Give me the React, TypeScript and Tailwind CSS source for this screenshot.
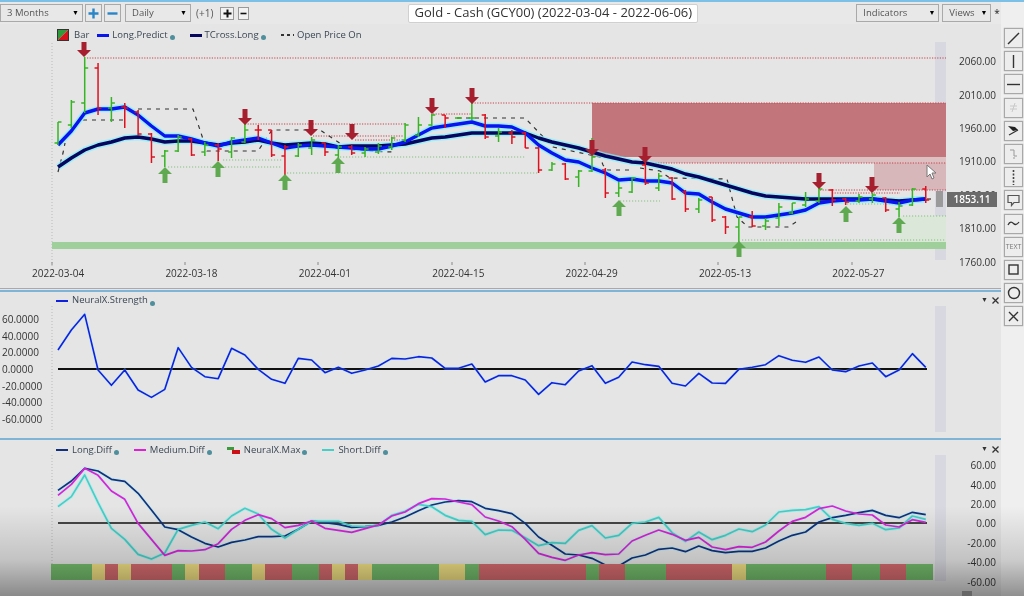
import { ReactNode } from 'react';

// bar: high, low, open (left tick), close (right tick), colour
type Bar = [number, number, number, number, 'g' | 'r'];

const BARS: Bar[] = [
  [122, 145, 143, 122, 'g'], [100, 128, 125, 102, 'g'], [57, 113, 103, 68, 'g'], [63, 115, 68, 108, 'r'],
  [97, 122, 108, 103, 'g'], [103, 128, 107, 108, 'r'], [110, 135, 112, 134, 'r'], [133, 163, 134, 157, 'r'],
  [150, 167, 156, 151, 'g'], [135, 152, 151, 137, 'g'], [138, 156, 139, 155, 'r'], [142, 156, 152, 145, 'g'],
  [143, 161, 145, 149, 'r'], [137, 158, 152, 138, 'g'], [123, 143, 142, 130, 'g'], [125, 140, 130, 130, 'r'],
  [130, 157, 130, 155, 'r'], [145, 175, 156, 147, 'r'], [143, 157, 156, 145, 'g'], [137, 155, 148, 140, 'g'],
  [143, 156, 143, 152, 'r'], [145, 163, 155, 147, 'g'], [145, 155, 147, 153, 'r'], [147, 157, 153, 149, 'g'],
  [143, 154, 152, 146, 'g'], [137, 150, 147, 138, 'g'], [123, 142, 140, 125, 'g'], [117, 137, 135, 125, 'g'],
  [114, 127, 125, 115, 'g'], [115, 128, 115, 118, 'r'], [117, 119, 118, 118, 'g'], [103, 120, 118, 118, 'g'],
  [114, 139, 115, 137, 'r'], [128, 142, 136, 132, 'g'], [130, 144, 133, 137, 'r'], [132, 148, 133, 148, 'r'],
  [147, 173, 148, 170, 'r'], [162, 171, 170, 164, 'g'], [163, 180, 164, 179, 'r'], [170, 187, 177, 171, 'g'],
  [138, 172, 171, 157, 'g'], [168, 198, 170, 193, 'r'], [182, 197, 193, 188, 'g'], [177, 193, 192, 178, 'g'],
  [157, 185, 165, 183, 'r'], [173, 191, 188, 176, 'g'], [177, 200, 178, 199, 'r'], [190, 212, 192, 209, 'r'],
  [198, 213, 209, 200, 'g'], [197, 222, 197, 220, 'r'], [216, 234, 217, 227, 'r'], [217, 243, 227, 217, 'g'],
  [211, 227, 217, 226, 'r'], [218, 230, 226, 221, 'g'], [203, 226, 218, 207, 'g'], [203, 214, 213, 203, 'g'],
  [192, 207, 205, 199, 'g'], [188, 203, 201, 189, 'g'], [189, 206, 190, 200, 'r'], [198, 205, 199, 202, 'r'],
  [194, 203, 201, 197, 'g'], [193, 203, 199, 195, 'g'], [197, 212, 198, 210, 'r'], [202, 217, 209, 206, 'g'],
  [188, 206, 205, 189, 'g'], [186, 203, 189, 200, 'r'],
];

const LONG_PREDICT = [
  145, 131, 113, 109, 109, 107, 115, 126, 136, 136, 139, 143, 146, 142, 140, 138, 143, 148, 146, 145, 146, 147,
  148, 149, 149, 146, 142, 135, 128, 126, 124, 122, 126, 126, 127, 133, 145, 153, 160, 162, 168, 173, 180, 179,
  181, 181, 183, 193, 194, 202, 209, 213, 217, 217, 215, 213, 210, 203, 201, 200, 200, 199, 201, 203, 200, 199,
];

const TCROSS_LONG = [
  167, 158, 150, 145, 142, 138, 137, 139, 142, 141, 141, 143, 145, 143, 142, 140, 143, 145, 144, 143, 144, 147,
  146, 146, 146, 145, 144, 141, 138, 137, 135, 133, 133, 133, 133, 133, 138, 142, 145, 148, 152, 156, 159, 162,
  163, 166, 169, 174, 177, 181, 185, 189, 193, 196, 197, 198, 199, 199, 199, 199, 199, 199, 200, 201, 200, 199,
];

const STRENGTH = [
  180, 120, 73, 240, 286, 240, 300, 322, 298, 173, 232, 260, 266, 175, 195, 238, 268, 280, 205, 210, 248, 232, 250,
  240, 228, 205, 207, 200, 204, 235, 235, 222, 276, 257, 257, 270, 313, 278, 284, 243, 227, 280, 262, 216, 224, 229,
  280, 288, 250, 279, 280, 238, 232, 224, 197, 211, 217, 201, 240, 245, 228, 219, 260, 240, 191, 232,
];

const LONG_DIFF = [
  163, 135, 97, 105, 130, 136, 172, 222, 273, 281, 303, 322, 333, 319, 312, 302, 302, 300, 280, 255, 260, 265, 274,
  272, 268, 258, 243, 224, 207, 198, 194, 197, 217, 224, 233, 262, 303, 328, 354, 357, 367, 387, 390, 366, 357, 340,
  336, 347, 330, 344, 350, 346, 346, 336, 315, 298, 288, 258, 245, 238, 230, 223, 238, 245, 229, 236,
];

const MEDIUM_DIFF = [
  178, 145, 97, 118, 165, 190, 262, 310, 358, 344, 345, 341, 323, 280, 253, 236, 248, 275, 268, 255, 277, 283, 289,
  278, 267, 240, 228, 203, 188, 189, 198, 206, 243, 255, 272, 310, 352, 364, 373, 357, 350, 356, 354, 315, 298, 282,
  295, 313, 304, 333, 341, 332, 334, 318, 285, 256, 244, 218, 210, 225, 234, 237, 267, 273, 251, 259,
];

const SHORT_DIFF = [
  212, 182, 117, 200, 277, 310, 355, 369, 351, 280, 268, 258, 278, 240, 217, 234, 280, 306, 280, 256, 256, 256, 270,
  272, 268, 238, 226, 205, 212, 238, 253, 256, 296, 282, 283, 305, 329, 320, 322, 283, 269, 306, 298, 262, 258, 244,
  290, 316, 288, 311, 298, 279, 287, 267, 228, 223, 221, 212, 250, 262, 268, 262, 281, 276, 240, 250,
];

const G = '#76bf6e';
const Y = '#f5e486';
const R = '#d86c70';

// edges of the NeuralX.Max strip
const MAX_STRIP: [number, number, string][] = [
  [51, 92, G], [92, 105, Y], [105, 118, R], [118, 131, Y], [131, 172, R], [172, 185, G], [185, 199, Y], [199, 225, R],
  [225, 252, G], [252, 265, Y], [265, 292, R], [292, 319, G], [319, 332, R], [332, 345, Y], [345, 358, R], [358, 372, Y],
  [372, 439, G], [439, 465, Y], [465, 479, G], [479, 586, R], [586, 599, G], [599, 625, R], [625, 666, G], [666, 732, R],
  [732, 746, Y], [746, 826, G], [826, 852, R], [852, 880, G], [880, 906, R], [906, 933, G],
];

const DOWN_ARROWS: [number, number][] = [[84, 57], [245, 125], [311, 136], [352, 140], [432, 114], [472, 104], [592, 156], [645, 163], [819, 189], [872, 193]];
const UP_ARROWS: [number, number][] = [[165, 167], [218, 161], [285, 174], [338, 157], [619, 200], [739, 241], [846, 206], [899, 217]];

const RED_DOTS: [number, number, number][] = [[87, 946, 58], [472, 592, 103], [433, 472, 114], [245, 405, 124], [313, 403, 136], [355, 400, 140], [592, 946, 103], [645, 946, 163], [820, 946, 190], [832, 900, 193]];
const GREEN_DOTS: [number, number, number][] = [[223, 282, 160], [168, 282, 167], [287, 539, 173], [340, 525, 157], [620, 660, 201], [847, 899, 204], [903, 946, 216], [742, 946, 240]];

const OPEN_PRICE = [
  '58,172 63,153 65,143',
  '83,120 125,120',
  '138,109 193,109 200,130 207,151 258,151 272,130 320,130 335,140 350,150 392,152',
  '457,118 525,118 553,147',
  '553,147 600,157 603,165 607,170 633,170',
  '640,168 660,171 670,178 727,179 732,198 737,217 748,227 788,227 796,222',
  '927,199 934,199',
];

const barX = (i: number) => 58 + 13.35 * i;
const pts = (values: number[], y: (v: number) => number = v => v) => values.map((v, i) => `${barX(i)},${y(v)}`).join(' ');

function Dot() {
  return <span className="inline-block w-[5px] h-[5px] rounded-full bg-[#4f8f9c] mt-[5px]" />;
}

function LegendLine({ className }: { className: string }) {
  return <span className={`inline-block w-[12px] ${className}`} />;
}

function Select({ label, className }: { label: string; className: string }) {
  return (
    <div className={`h-[18px] border border-[#a9a9a9] flex items-center justify-between pl-[6px] pr-[3px] ${className}`}>
      <span className="text-[9.5px] text-[#555]">{label}</span>
      <span className="text-[7px] text-black">▼</span>
    </div>
  );
}

function PanelControls() {
  return (
    <div className="flex items-center gap-[4px] pr-[2px] text-[#333]">
      <span className="text-[7px]">▼</span>
      <svg width="7" height="7" viewBox="0 0 7 7"><path d="M0.5 0.5 6.5 6.5M6.5 0.5 0.5 6.5" stroke="#333" strokeWidth="1.3" /></svg>
    </div>
  );
}

function ToolButton({ children }: { children: ReactNode }) {
  return (
    <div className="w-[19px] h-[20px] border border-[#a8a8a8] bg-[#ededed] flex items-center justify-center shadow-[0_0_1px_#999] shrink-0">
      {children}
    </div>
  );
}

function AxisLabels({ values, itemClass, className }: { values: string[]; itemClass: string; className: string }) {
  return (
    <div className={`flex flex-col text-[10px] text-[#333] ${className}`}>
      {values.map(v => (
        <div key={v} className={`flex items-center shrink-0 ${itemClass}`}>{v}</div>
      ))}
    </div>
  );
}

function StripBackground({ top, height }: { top: number; height: number }) {
  return <rect x={935} y={top} width={11} height={height} fill="#d8d8e0" />;
}

function MainChart() {
  return (
    <svg width="900" height="224" viewBox="50 42 900 224" className="shrink-0">
      <StripBackground top={42} height={218} />
      <line x1={52} y1={43} x2={52} y2={266} stroke="#bbb" strokeDasharray="1 2" />

      {/* zones */}
      <rect x={592} y={103} width={354} height={54} fill="#c2767c" />
      <rect x={645} y={157} width={301} height={6} fill="#dcc0c2" />
      <rect x={874} y={163} width={72} height={27} fill="#d7b7ba" />
      <rect x={900} y={216} width={46} height={26} fill="#dbe7d8" />
      <rect x={52} y={242} width={894} height={7} fill="#9fcf9a" />

      {RED_DOTS.map(([a, b, y]) => (
        <line key={`${a}-${y}`} x1={a} y1={y} x2={b} y2={y} stroke="#c8404a" strokeDasharray="1.2 1.4" />
      ))}
      {GREEN_DOTS.map(([a, b, y]) => (
        <line key={`${a}-${y}`} x1={a} y1={y} x2={b} y2={y} stroke="#6fb964" opacity="0.8" strokeDasharray="1.2 1.8" />
      ))}
      {OPEN_PRICE.map(p => (
        <polyline key={p} points={p} fill="none" stroke="#333" strokeWidth="1.2" strokeDasharray="4 5" />
      ))}

      {/* averages */}
      <polyline points={pts(TCROSS_LONG)} fill="none" stroke="#7ff2fc" strokeWidth="6.5" opacity="0.7" strokeLinejoin="round" />
      <polyline points={pts(LONG_PREDICT)} fill="none" stroke="#7ff2fc" strokeWidth="6.5" opacity="0.7" strokeLinejoin="round" />
      <polyline points={pts(TCROSS_LONG)} fill="none" stroke="#06065e" strokeWidth="3.4" strokeLinejoin="round" />
      <polyline points={pts(LONG_PREDICT)} fill="none" stroke="#0a14ee" strokeWidth="3.4" strokeLinejoin="round" />

      {BARS.map(([hi, lo, open, close, c], i) => {
        const x = barX(i);
        const col = c === 'g' ? '#36b522' : '#e0101e';
        return (
          <g key={i} stroke={col} strokeWidth="1.5">
            <line x1={x} y1={hi} x2={x} y2={lo} />
            <line x1={x - 3.5} y1={open} x2={x} y2={open} />
            <line x1={x} y1={close} x2={x + 3.5} y2={close} />
          </g>
        );
      })}

      {DOWN_ARROWS.map(([x, tip]) => (
        <path key={x} d={`M${x - 2.5} ${tip - 16}h5v9h4.5l-7 7-7-7h4.5z`} fill="#a51f2e" />
      ))}
      {UP_ARROWS.map(([x, tip]) => (
        <path key={x} d={`M${x - 2.5} ${tip + 16}h5v-9h4.5l-7-7-7 7h4.5z`} fill="#5fa950" />
      ))}

      <rect x={936} y={191} width={7} height={16} fill="#9a9a9a" />
      {[52, 185, 318, 452, 585, 718, 852].map(x => (
        <line key={x} x1={x} y1={262} x2={x} y2={265} stroke="#888" />
      ))}
    </svg>
  );
}

function StrengthChart() {
  const y = (v: number) => 290 + v / 3;
  return (
    <svg width="900" height="127" viewBox="50 306 900 127" className="shrink-0">
      <StripBackground top={306} height={126} />
      <line x1={52} y1={306} x2={52} y2={430} stroke="#bbb" strokeDasharray="1 2" />
      <line x1={58} y1={369} x2={927} y2={369} stroke="#111" strokeWidth="2" />
      <polyline points={pts(STRENGTH, y)} fill="none" stroke="#86f0fa" strokeWidth="3" opacity="0.3" />
      <polyline points={pts(STRENGTH, y)} fill="none" stroke="#1020e0" strokeWidth="1.6" strokeLinejoin="round" />
    </svg>
  );
}

function DiffChart() {
  const y = (v: number) => 436 + v / 3;
  return (
    <svg width="900" height="127" viewBox="50 455 900 127" className="shrink-0">
      <StripBackground top={455} height={126} />
      <line x1={52} y1={455} x2={52} y2={564} stroke="#bbb" strokeDasharray="1 2" />
      <polyline points={pts(SHORT_DIFF, y)} fill="none" stroke="#7ff2f6" strokeWidth="3.5" opacity="0.35" />
      <polyline points={pts(LONG_DIFF, y)} fill="none" stroke="#7ff2f6" strokeWidth="3.5" opacity="0.3" />
      <polyline points={pts(MEDIUM_DIFF, y)} fill="none" stroke="#7ff2f6" strokeWidth="3.5" opacity="0.3" />
      <line x1={58} y1={523} x2={927} y2={523} stroke="#111" strokeWidth="1.5" />
      <polyline points={pts(LONG_DIFF, y)} fill="none" stroke="#13307e" strokeWidth="1.7" strokeLinejoin="round" />
      <polyline points={pts(SHORT_DIFF, y)} fill="none" stroke="#45cfc6" strokeWidth="1.7" strokeLinejoin="round" />
      <polyline points={pts(MEDIUM_DIFF, y)} fill="none" stroke="#e01fd6" strokeWidth="1.7" strokeLinejoin="round" />
      {MAX_STRIP.map(([a, b, c]) => (
        <rect key={a} x={a} y={564} width={b - a} height={16} fill={c} />
      ))}
    </svg>
  );
}

export default function App() {
  const dates = ['2022-03-04', '2022-03-18', '2022-04-01', '2022-04-15', '2022-04-29', '2022-05-13', '2022-05-27'];

  return (
    <div
      className="relative w-[1024px] h-[596px] overflow-hidden bg-[#efefef] text-[#3a4654] blur-[0.6px]"
      style={{ fontFamily: '"Open Sans", "Noto Sans", sans-serif' }}
    >
      <div className="h-[2px] bg-[#7cc0e8]" />
      <div className="flex h-[594px]">
        {/* Left: toolbar and the three panes */}
        <div className="w-[1001px] flex flex-col bg-[#e5e5e5]">
          <div className="h-[22px] shrink-0 flex items-center bg-[#e8e8e8]">
            <Select label="3 Months" className="w-[83px]" />
            <div className="ml-[2px] w-[17px] h-[18px] border border-[#a9a9a9] flex items-center justify-center">
              <svg width="11" height="11" viewBox="0 0 11 11"><path d="M5.5 0.5v10M0.5 5.5h10" stroke="#2a85c8" strokeWidth="2.4" /></svg>
            </div>
            <div className="ml-[2px] w-[17px] h-[18px] border border-[#a9a9a9] flex items-center justify-center">
              <svg width="11" height="11" viewBox="0 0 11 11"><path d="M0.5 5.5h10" stroke="#2a85c8" strokeWidth="2.4" /></svg>
            </div>
            <Select label="Daily" className="ml-[4px] w-[66px]" />
            <span className="ml-[5px] text-[10px] text-[#555]">(+1)</span>
            <div className="ml-[7px] w-[14px] h-[13px] border border-[#999] bg-[#f2f2f2] flex items-center justify-center">
              <svg width="9" height="9" viewBox="0 0 9 9"><path d="M4.5 0.5v8M0.5 4.5h8" stroke="#111" strokeWidth="2" /></svg>
            </div>
            <div className="ml-[4px] w-[11px] h-[13px] border border-[#999] bg-[#f2f2f2] flex items-center justify-center">
              <svg width="7" height="7" viewBox="0 0 7 7"><path d="M0.5 3.5h6" stroke="#111" strokeWidth="1.6" /></svg>
            </div>
            <div className="ml-[159px] w-[290px] h-[19px] bg-white rounded-[2px] border border-[#d0d0d0] flex items-center justify-center">
              <span className="text-[13px] text-[#333] whitespace-nowrap">Gold - Cash (GCY00) (2022-03-04 - 2022-06-06)</span>
            </div>
            <Select label="Indicators" className="ml-[158px] w-[83px]" />
            <Select label="Views" className="ml-[3px] w-[49px]" />
            <span className="ml-[3px] text-[10px] text-[#222]">*</span>
          </div>

          {/* Price pane */}
          <div className="relative h-[265px] shrink-0 flex flex-col border-b border-[#a8a8b4]">
            <div className="h-[18px] shrink-0 flex items-center pl-[57px] text-[9.5px] pt-[4px]">
              <svg width="12" height="12" viewBox="0 0 12 12">
                <path d="M0 0h12L0 12z" fill="#2e9a3a" />
                <path d="M12 0v12H0z" fill="#d8101c" />
                <rect x="0.5" y="0.5" width="11" height="11" fill="none" stroke="#333" />
              </svg>
              <span className="ml-[5px]">Bar</span>
              <LegendLine className="ml-[8px] h-[3px] bg-[#0a14ee]" />
              <span className="ml-[3px]">Long.Predict</span>
              <span className="ml-[2px] flex"><Dot /></span>
              <LegendLine className="ml-[15px] h-[3px] bg-[#06065e]" />
              <span className="ml-[3px]">TCross.Long</span>
              <span className="ml-[2px] flex"><Dot /></span>
              <span className="ml-[15px] flex gap-[3px] items-center">
                <span className="w-[3px] h-[1.5px] bg-[#333]" />
                <span className="w-[3px] h-[1.5px] bg-[#333]" />
                <span className="w-[1.5px] h-[1.5px] bg-[#333]" />
              </span>
              <span className="ml-[3px]">Open Price On</span>
            </div>
            <div className="flex h-[224px] shrink-0">
              <div className="w-[50px] shrink-0" />
              <MainChart />
              <AxisLabels
                values={['2060.00', '2010.00', '1960.00', '1910.00', '1860.00', '1810.00', '1760.00']}
                itemClass="h-[33.4px] justify-end"
                className="w-[51px] pr-[5px] pt-[3px]"
              />
            </div>
            <div className="flex pl-[32px] text-[10px] text-[#333]">
              {dates.map(d => (
                <span key={d} className="w-[133.4px] leading-[14px]">{d}</span>
              ))}
            </div>
            <div className="absolute left-[947px] top-[168px] w-[50px] h-[15px] bg-[#6b6b6b] text-white text-[10px] font-semibold flex items-center justify-center">
              1853.11
            </div>
          </div>

          {/* NeuralX.Strength pane */}
          <div className="h-[148px] shrink-0 border-t-2 border-[#7fb4d6] flex flex-col mt-[1px]">
            <div className="h-[14px] shrink-0 flex items-center justify-between pl-[56px] pt-[2px] text-[9.5px]">
              <div className="flex items-center pt-[1px]">
                <LegendLine className="h-[2px] bg-[#1020e0]" />
                <span className="ml-[4px]">NeuralX.Strength</span>
                <span className="ml-[2px] flex"><Dot /></span>
              </div>
              <PanelControls />
            </div>
            <div className="flex h-[127px] shrink-0">
              <AxisLabels
                values={['60.0000', '40.0000', '20.0000', '0.0000', '-20.0000', '-40.0000', '-60.0000']}
                itemClass="h-[16.7px]"
                className="w-[50px] pl-[2px] pt-[5px]"
              />
              <StrengthChart />
            </div>
          </div>

          {/* Diff pane */}
          <div className="flex-1 border-t-2 border-[#7fb4d6] flex flex-col">
            <div className="h-[15px] shrink-0 flex items-center justify-between pl-[56px] text-[9.5px]">
              <div className="flex items-center pt-[5px]">
                <LegendLine className="h-[2px] bg-[#13307e]" />
                <span className="ml-[4px]">Long.Diff</span>
                <span className="ml-[2px] flex"><Dot /></span>
                <LegendLine className="ml-[15px] h-[2px] bg-[#e01fd6]" />
                <span className="ml-[4px]">Medium.Diff</span>
                <span className="ml-[2px] flex"><Dot /></span>
                <svg className="ml-[15px]" width="13" height="7" viewBox="0 0 13 7">
                  <rect x="0" y="0" width="7" height="3" fill="#3c9a3c" />
                  <rect x="5" y="3" width="8" height="4" fill="#cc1018" />
                </svg>
                <span className="ml-[4px]">NeuralX.Max</span>
                <span className="ml-[2px] flex"><Dot /></span>
                <LegendLine className="ml-[15px] h-[2px] bg-[#45cfc6]" />
                <span className="ml-[4px]">Short.Diff</span>
                <span className="ml-[2px] flex"><Dot /></span>
              </div>
              <div className="pt-[3px]"><PanelControls /></div>
            </div>
            <div className="flex">
              <div className="w-[50px] shrink-0" />
              <DiffChart />
              <AxisLabels
                values={['60.00', '40.00', '20.00', '0.00', '-20.00', '-40.00', '-60.00']}
                itemClass="h-[19.4px] justify-end"
                className="w-[51px] pr-[5px] pt-[1px]"
              />
            </div>
          </div>
        </div>

        {/* Right: drawing tools */}
        <div className="flex-1 flex flex-col gap-[3.2px] pt-[26px] pl-[3px]">
          <ToolButton><svg width="13" height="13" viewBox="0 0 13 13"><path d="M1 12 12 1" stroke="#333" strokeWidth="1.4" /></svg></ToolButton>
          <ToolButton><svg width="13" height="13" viewBox="0 0 13 13"><path d="M6.5 0v13" stroke="#333" strokeWidth="1.4" /></svg></ToolButton>
          <ToolButton><svg width="13" height="13" viewBox="0 0 13 13"><path d="M0 6.5h13" stroke="#333" strokeWidth="1.4" /></svg></ToolButton>
          <ToolButton><svg width="13" height="13" viewBox="0 0 13 13"><path d="M3 5h7M3 8h7M8 2 5 11" stroke="#c9c9c9" /></svg></ToolButton>
          <ToolButton><svg width="13" height="13" viewBox="0 0 13 13"><path d="M1 2 8 3 11 6 6 7z" fill="#222" /><path d="M2 11 11 6" stroke="#333" strokeWidth="1.2" /></svg></ToolButton>
          <ToolButton><svg width="13" height="13" viewBox="0 0 13 13"><path d="M3 3h4v6h3M7 10v2" stroke="#999" fill="none" /></svg></ToolButton>
          <ToolButton><svg width="13" height="15" viewBox="0 0 13 15"><path d="M6.5 0v15" stroke="#444" strokeWidth="1.6" strokeDasharray="2 1.5" /></svg></ToolButton>
          <ToolButton><svg width="13" height="13" viewBox="0 0 13 13"><path d="M1 1.5h11v7H7L4.5 11.5V8.500H1z" fill="none" stroke="#555" strokeWidth="1.2" /></svg></ToolButton>
          <ToolButton><svg width="13" height="13" viewBox="0 0 13 13"><path d="M1 8c2-4 4-3 5.500-1.500S10 8 12 5" fill="none" stroke="#333" strokeWidth="1.3" /></svg></ToolButton>
          <ToolButton><span className="text-[7px] leading-none text-[#777]">TEXT</span></ToolButton>
          <ToolButton><svg width="13" height="13" viewBox="0 0 13 13"><rect x="2" y="2" width="9" height="9" fill="none" stroke="#333" strokeWidth="1.4" /></svg></ToolButton>
          <ToolButton><svg width="14" height="14" viewBox="0 0 14 14"><circle cx="7" cy="7" r="5.500" fill="none" stroke="#333" strokeWidth="1.4" /></svg></ToolButton>
          <ToolButton><svg width="13" height="13" viewBox="0 0 13 13"><path d="M2 2 11 11M11 2 2 11" stroke="#333" strokeWidth="1.4" /></svg></ToolButton>
        </div>
      </div>

      {/* mouse pointer */}
      <svg className="absolute left-[926px] top-[164px]" width="11" height="17" viewBox="0 0 11 17">
        <path d="M1 1v12l3-3 2 5 2-1-2-5h4z" fill="#fff" stroke="#777" />
      </svg>

      {/* video player fade along the bottom edge */}
      <div className="absolute inset-x-0 bottom-0 h-[90px] bg-gradient-to-b from-transparent via-black/15 via-60% to-black/40 pointer-events-none" />
      <div className="absolute left-[962px] bottom-0 w-[10px] h-[5px] bg-[#666]" />
    </div>
  );
}
